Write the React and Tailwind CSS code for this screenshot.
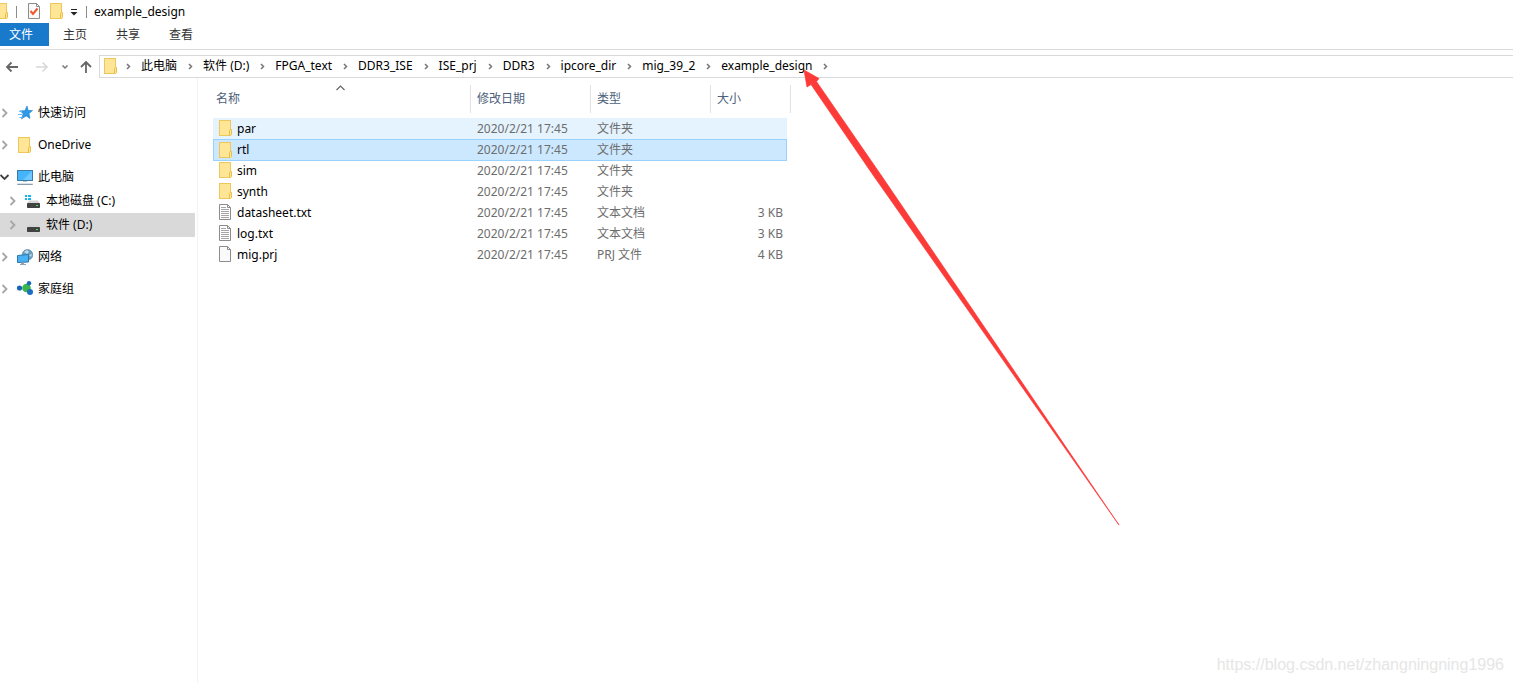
import clsx from 'clsx';

const crumbs = [
  '此电脑',
  '软件 (D:)',
  'FPGA_text',
  'DDR3_ISE',
  'ISE_prj',
  'DDR3',
  'ipcore_dir',
  'mig_39_2',
  'example_design',
];

const tree = [
  { label: '快速访问', icon: StarIcon },
  { label: 'OneDrive', icon: FolderIcon },
  {
    label: '此电脑',
    icon: ComputerIcon,
    open: true,
    children: [
      { label: '本地磁盘 (C:)', icon: SystemDriveIcon },
      { label: '软件 (D:)', icon: DriveIcon, selected: true },
    ],
  },
  { label: '网络', icon: NetworkIcon },
  { label: '家庭组', icon: HomeGroupIcon },
];

const files = [
  { name: 'par', type: '文件夹', size: '', icon: FolderIcon, state: 'hover' },
  { name: 'rtl', type: '文件夹', size: '', icon: FolderIcon, state: 'selected' },
  { name: 'sim', type: '文件夹', size: '', icon: FolderIcon },
  { name: 'synth', type: '文件夹', size: '', icon: FolderIcon },
  { name: 'datasheet.txt', type: '文本文档', size: '3 KB', icon: TextFileIcon },
  { name: 'log.txt', type: '文本文档', size: '3 KB', icon: TextFileIcon },
  { name: 'mig.prj', type: 'PRJ 文件', size: '4 KB', icon: BlankFileIcon },
];

const modified = '2020/2/21 17:45';

function Icon({ children }) {
  return (
    <svg width="16" height="17" viewBox="0 1 16 17" className="shrink-0" aria-hidden="true">
      {children}
    </svg>
  );
}

function FolderIcon() {
  return (
    <Icon>
      <rect x="1.5" y="1.5" width="11" height="15" fill="#ffe596" stroke="#ecc85c" />
      <path d="M11.5 16.5v-5l.8-1h1.2v5l-1 1z" fill="#ffe596" stroke="#e8bf48" />
    </Icon>
  );
}

function TextFileIcon() {
  return (
    <Icon>
      <path d="M1.5 1.5h8l3 3v12h-11z" fill="#fff" stroke="#8c8c8c" />
      <path d="M9.5 1.5v3h3" fill="none" stroke="#8c8c8c" />
      <path d="M3 4.5h5M3 6.5h8M3 8.5h8M3 10.5h8M3 12.5h8M3 14.5h8" stroke="#a6a6a6" />
    </Icon>
  );
}

function BlankFileIcon() {
  return (
    <Icon>
      <path d="M1.5 1.5h8l3 3v12h-11z" fill="#fafafa" stroke="#8c8c8c" />
      <path d="M9.5 1.5v3h3" fill="none" stroke="#8c8c8c" />
    </Icon>
  );
}

function PropertiesIcon() {
  return (
    <Icon>
      <path d="M2.5 1.5h8l3 3v12h-11z" fill="#fafafa" stroke="#8c8c8c" />
      <path d="M10.5 1.5v3h3" fill="none" stroke="#8c8c8c" />
      <path d="M4.5 9l2.500 3 4.500-5.500" fill="none" stroke="#f0572a" strokeWidth="2" />
    </Icon>
  );
}

function StarIcon() {
  return (
    <Icon>
      <path d="M10 2l1.200 4.400 4.300.2-3.500 2.900 1 4.900-3.800-2.500-4.700 2.900 1.700-5-3-3h4.600z" fill="#2e9be8" stroke="#1a7cc9" strokeWidth=".6" />
      <path d="M2 7.500h3M1 10.500h4M2.500 13.500h3" stroke="#6cbcf2" />
    </Icon>
  );
}

function ComputerIcon() {
  return (
    <Icon>
      <rect x=".5" y="2.500" width="15" height="10" fill="#45b4fa" stroke="#3a7ca8" />
      <path d="M15 3v9H6z" fill="#6cc8ff" />
      <path d="M6 13h4v1H6z" fill="#b8c4cc" />
      <path d="M1 15h14l1 2H0z" fill="#8a9bb0" />
      <path d="M1 15.500h14" stroke="#dce3ea" />
    </Icon>
  );
}

function DriveIcon() {
  return (
    <Icon>
      <path d="M4 8.500h9l2 3H2z" fill="#d5d5d5" />
      <rect x="2" y="11" width="13" height="5" rx=".8" fill="#424242" />
      <rect x="11" y="13" width="2" height="1" fill="#45e05a" />
    </Icon>
  );
}

function SystemDriveIcon() {
  return (
    <Icon>
      <path d="M4 8.500h9l2 3H2z" fill="#d5d5d5" />
      <path d="M0 3h2v2H0zM3 3h3v2H3zM0 6h2v2H0zM3 6h3v2H3z" fill="#16b4ee" />
      <rect x="2" y="11" width="13" height="5" rx=".8" fill="#424242" />
      <rect x="11" y="13" width="2" height="1" fill="#45e05a" />
    </Icon>
  );
}

function NetworkIcon() {
  return (
    <Icon>
      <circle cx="10.500" cy="6.800" r="5.300" fill="#6f9fbd" stroke="#4d7d9d" strokeWidth=".6" />
      <path d="M7 4l3-2 2 2-2 2zM12 7l3-1-1 3z" fill="#b9dced" />
      <path d="M.5 7.500l11-1v7.500l-11 .5z" fill="#48b2f5" stroke="#2c78ab" />
      <path d="M4 14.500h3v1.500h2v1H3v-1h1z" fill="#8fa5b5" />
    </Icon>
  );
}

function HomeGroupIcon() {
  return (
    <Icon>
      <circle cx="9.500" cy="8" r="4.300" fill="#39b54a" />
      <circle cx="2.500" cy="8" r="2.600" fill="#1565b3" />
      <circle cx="12" cy="3.300" r="2.200" fill="#1769b5" />
      <circle cx="13" cy="12" r="3" fill="#1c6fc0" />
    </Icon>
  );
}

function Chevron({ open }) {
  return (
    <svg width="8" height="10" viewBox="0 0 8 10" className="shrink-0 overflow-visible" fill="none" aria-hidden="true">
      {open ? (
        <path d="M-.5 3l4 4 4-4" stroke="#404040" strokeWidth="1.800" />
      ) : (
        <path d="M1.500 1l4 4-4 4" stroke="#a6a6a6" strokeWidth="1.800" />
      )}
    </svg>
  );
}

function CrumbChevron() {
  return (
    <svg width="26" height="9" viewBox="0 0 26 9" className="shrink-0" fill="none" aria-hidden="true">
      <path d="M12 2l2.500 2.500L12 7" stroke="#777" strokeWidth="1.500" />
    </svg>
  );
}

function TitleBar() {
  return (
    <header className="flex h-[23px] items-center overflow-hidden">
      <div className="-ml-[6px]">
        <FolderIcon />
      </div>
      <div className="ml-[6px] h-3 w-px bg-[#8c8c8c]" />
      <button type="button" className="ml-[9px]" aria-label="属性">
        <PropertiesIcon />
      </button>
      <button type="button" className="ml-[7px]" aria-label="新建文件夹">
        <FolderIcon />
      </button>
      <button type="button" className="ml-[5px]" aria-label="自定义快速访问工具栏">
        <svg width="8" height="8" viewBox="0 0 8 8" aria-hidden="true">
          <path d="M1 1.500h6" stroke="#222" />
          <path d="M0.500 4h7L4 7.500z" fill="#222" />
        </svg>
      </button>
      <div className="ml-2 h-3 w-px bg-[#8c8c8c]" />
      <h1 className="ml-[7px]">example_design</h1>
    </header>
  );
}

function RibbonTabs() {
  return (
    <div className="flex h-[27px] items-start border-b border-[#dadbdc] text-[#333]">
      <button type="button" className="h-[23px] w-[49px] bg-[#1979ca] pt-px pr-[7px] text-white">文件</button>
      <button type="button" className="h-[23px] w-[53px] pt-px pr-px">主页</button>
      <button type="button" className="h-[23px] w-[53px] pt-px pr-px">共享</button>
      <button type="button" className="h-[23px] w-[53px] pt-px pr-px">查看</button>
    </div>
  );
}

function AddressBar() {
  return (
    <div className="flex h-[28px] items-end">
      <div className="flex h-[23px] w-[99px] shrink-0 items-center">
        <button type="button" className="ml-[5px]" aria-label="后退">
          <svg width="14" height="12" viewBox="0 0 14 12" fill="none" stroke="#666" strokeWidth="1.800">
            <path d="M13 6H2M6.500 1.500L2 6l4.500 4.500" />
          </svg>
        </button>
        <button type="button" className="ml-4" aria-label="前进">
          <svg width="14" height="12" viewBox="0 0 14 12" fill="none" stroke="#d8d8d8" strokeWidth="1.600">
            <path d="M1 6h11M7.500 1.500L12 6l-4.500 4.500" />
          </svg>
        </button>
        <button type="button" className="ml-3" aria-label="最近浏览的位置">
          <svg width="8" height="8" viewBox="0 0 8 8" fill="none" stroke="#777" strokeWidth="1.500">
            <path d="M1.500 2.500L4 5l2.500-2.500" />
          </svg>
        </button>
        <button type="button" className="ml-[10px]" aria-label="上移">
          <svg width="14" height="14" viewBox="0 0 14 14" fill="none" stroke="#666" strokeWidth="1.800">
            <path d="M7 13V2M2 7l5-5 5 5" />
          </svg>
        </button>
      </div>
      <nav className="flex h-[23px] flex-1 items-center border-y border-l border-[#d9d9d9] pb-px pl-[3px]" aria-label="地址">
        <FolderIcon />
        <div className="-ml-[4px]">
          <CrumbChevron />
        </div>
        <ol className="flex items-center">
          {crumbs.map((crumb) => (
            <li key={crumb} className="flex items-center">
              <a href="#" className="whitespace-nowrap">{crumb}</a>
              <CrumbChevron />
            </li>
          ))}
        </ol>
      </nav>
    </div>
  );
}

function TreeRow({ item, nested }) {
  const ItemIcon = item.icon;
  return (
    <a
      href="#"
      className={clsx('mr-[2px] flex h-6 items-center', nested ? 'pl-[9px]' : 'pl-px', item.selected && 'bg-[#d9d9d9]')}
    >
      <Chevron open={item.open} />
      <span className="mr-[5px] ml-2"><ItemIcon /></span>
      <span>{item.label}</span>
    </a>
  );
}

function Sidebar() {
  return (
    <aside className="w-[198px] shrink-0 border-r border-[#f3f3f3] pt-[23px]">
      <ul className="flex flex-col gap-2">
        {tree.map((item) => (
          <li key={item.label}>
            <TreeRow item={item} />
            {item.children ? (
              <ul>
                {item.children.map((child) => (
                  <li key={child.label}>
                    <TreeRow item={child} nested />
                  </li>
                ))}
              </ul>
            ) : null}
          </li>
        ))}
      </ul>
    </aside>
  );
}

function HeaderCell({ children, first }) {
  return (
    <th scope="col" className="p-0 pb-[5px] text-left font-normal">
      <div
        className={clsx(
          'relative flex h-[28px] items-center border-r border-[#e2e2e2]',
          first ? 'pl-[3px]' : 'pl-[6px]',
        )}
      >
        {children}
        {first ? (
          <svg width="9" height="6" viewBox="0 0 9 6" className="absolute top-0 left-[123px]" fill="none" aria-hidden="true">
            <path d="M.5 5l4-4 4 4" stroke="#666" strokeWidth="1.200" />
          </svg>
        ) : null}
      </div>
    </th>
  );
}

function FileRow({ file }) {
  const FileIcon = file.icon;
  const selected = file.state === 'selected';
  const cell = clsx(
    'flex items-center whitespace-nowrap',
    selected ? '-mb-px h-[22px] border-y border-[#99d1ff] bg-[#cce8ff]' : 'h-[21px]',
    file.state === 'hover' && 'bg-[#e5f3ff]',
  );
  return (
    <tr>
      <td className="p-0">
        <div className={clsx(cell, 'gap-[3px] text-black', selected ? 'border-l pl-[4px]' : 'pl-[5px]')}>
          <FileIcon />
          <span>{file.name}</span>
        </div>
      </td>
      <td className="p-0">
        <div className={clsx(cell, 'pl-[6px]')}>{modified}</div>
      </td>
      <td className="p-0">
        <div className={clsx(cell, 'pl-[6px]')}>{file.type}</div>
      </td>
      <td className="p-0 pr-1">
        <div className={clsx(cell, 'justify-end pr-1', selected && 'border-r')}>{file.size}</div>
      </td>
    </tr>
  );
}

function FileList() {
  return (
    <main className="flex-1 pt-[7px] pl-[15px]">
      <table className="w-[578px] table-fixed border-collapse text-[#6d6d6d]">
        <colgroup>
          <col className="w-[258px]" />
          <col className="w-[120px]" />
          <col className="w-[120px]" />
          <col className="w-[80px]" />
        </colgroup>
        <thead className="text-[#4c607a]">
          <tr>
            <HeaderCell first>名称</HeaderCell>
            <HeaderCell>修改日期</HeaderCell>
            <HeaderCell>类型</HeaderCell>
            <HeaderCell>大小</HeaderCell>
          </tr>
        </thead>
        <tbody>
          {files.map((file) => (
            <FileRow key={file.name} file={file} />
          ))}
        </tbody>
      </table>
    </main>
  );
}

function ArrowMark() {
  return (
    <svg
      width="320"
      height="460"
      viewBox="0 0 320 460"
      className="pointer-events-none absolute top-[68px] left-[802px]"
      aria-hidden="true"
    >
      <path
        d="M2 2L17 10.500L14.500 13.500L79 107L317 457L71 107L9 16.500L5 19z"
        fill="#fc3a38"
        stroke="#fc3a38"
        strokeWidth=".7"
      />
    </svg>
  );
}

export default function App() {
  return (
    <div className="relative flex min-h-screen flex-col bg-white font-['Noto_Sans','Noto_Sans_CJK_SC',sans-serif] text-[12px] text-black">
      <TitleBar />
      <RibbonTabs />
      <AddressBar />
      <div className="flex flex-1">
        <Sidebar />
        <FileList />
      </div>
      <ArrowMark />
      <div className="absolute right-[9px] bottom-[6px] font-['Liberation_Sans',sans-serif] text-[16px] text-[#e6e6e6]">
        https://blog.csdn.net/zhangningning1996
      </div>
    </div>
  );
}
